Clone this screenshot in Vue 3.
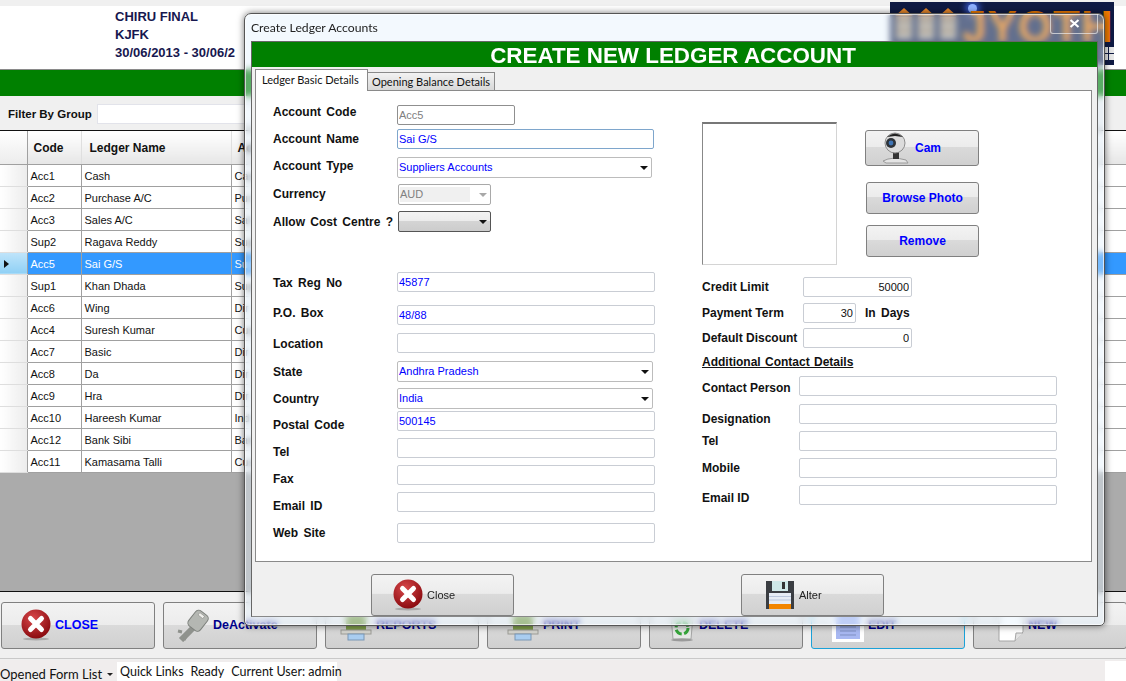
<template>
  <div class="screen">
    <header class="top">
      <div class="company">
        <div>CHIRU FINAL</div>
        <div>KJFK</div>
        <div>30/06/2013 - 30/06/2</div>
      </div>
      <div class="logo">
        <svg width="70" height="50" viewBox="0 0 70 50">
          <g v-for="x in [3, 25, 47]" :key="x">
            <path :d="`M${x} 14 L${x + 9} 6 L${x + 18} 14Z`" fill="#e8872a" />
            <rect :x="x + 1" y="15" width="16" height="22" fill="#b5aa98" />
            <rect :x="x + 3" y="18" width="4" height="4" fill="#6b3f1a" />
            <rect :x="x + 10" y="18" width="4" height="4" fill="#6b3f1a" />
            <rect :x="x + 3" y="27" width="4" height="4" fill="#6b3f1a" />
            <rect :x="x + 10" y="27" width="4" height="4" fill="#6b3f1a" />
          </g>
        </svg>
        <span class="star"></span>
        <span class="logo-name">JYOTHI</span>
        <span class="logo-dots"><i></i><i></i><i></i><i></i></span>
      </div>
    </header>
    <div class="green-bar"></div>
    <div class="filter-bar">
      <b>Filter By Group</b>
      <input class="filter-input" type="text" />
    </div>

    <table class="grid">
      <thead>
        <tr>
          <th class="head-col"></th>
          <th class="code-col">Code</th>
          <th class="name-col">Ledger Name</th>
          <th class="type-col">Acc</th>
          <th class="bal-col"></th>
        </tr>
      </thead>
      <tbody>
        <tr v-for="row in ledgers" :key="row.code" :class="{ selected: row.code === 'Acc5' }">
          <td class="row-head"><span v-if="row.code === 'Acc5'" class="pointer"></span></td>
          <td>{{ row.code }}</td>
          <td>{{ row.name }}</td>
          <td>{{ row.type }}</td>
          <td class="bal">{{ row.bal }}</td>
        </tr>
      </tbody>
    </table>
    <div class="grey-area"></div>

    <div class="action-bar">
      <button class="big-btn b-close" type="button">
        <svg width="30" height="32" viewBox="0 0 30 32"><use href="#x-circle" /></svg>
        <span class="blue-label">CLOSE</span>
      </button>
      <button class="big-btn b-key" type="button">
        <svg width="34" height="34" viewBox="0 0 34 34">
          <path d="M18 19 L5 32" stroke="#8f928d" stroke-width="6" />
          <path d="M6 24 L2 23 M10 28 L8 32" stroke="#8f928d" stroke-width="3" />
          <rect x="15" y="3" width="15" height="19" rx="4" transform="rotate(38 22 12)" fill="#b4b7b2" stroke="#7d807c" />
          <rect x="22" y="6" width="6" height="3" transform="rotate(38 25 8)" fill="#eeeeea" stroke="#8a8a86" stroke-width="0.6" />
        </svg>
        <span class="navy-label">DeActivate</span>
      </button>
      <button class="big-btn b-report" type="button">
        <svg width="32" height="34" viewBox="0 0 32 34"><use href="#printer" /></svg>
        <span class="navy-label">REPORTS</span>
      </button>
      <button class="big-btn b-print" type="button">
        <svg width="32" height="34" viewBox="0 0 32 34"><use href="#printer" /></svg>
        <span class="navy-label">PRINT</span>
      </button>
      <button class="big-btn b-delete" type="button">
        <svg width="26" height="34" viewBox="0 0 26 34">
          <path d="M2 8 H24 L22 31 H4Z" fill="#e6e8e6" stroke="#a5a5a5" />
          <circle cx="13" cy="20" r="6" fill="none" stroke="#35a53a" stroke-width="3" stroke-dasharray="7 2.5" />
          <ellipse cx="13" cy="32" rx="11" ry="1.5" fill="#9a9a9a" />
        </svg>
        <span class="navy-label">DELETE</span>
      </button>
      <button class="big-btn b-edit" type="button">
        <svg width="32" height="34" viewBox="0 0 32 34">
          <rect width="32" height="34" fill="#fff" />
          <rect x="4" y="0" width="24" height="31" fill="#a8b8f2" />
          <path d="M8 19 H24 M8 23 H24 M8 27 H24" stroke="#7f8fc2" />
        </svg>
        <span class="navy-label">EDIT</span>
      </button>
      <button class="big-btn b-new" type="button">
        <svg width="26" height="34" viewBox="0 0 26 34">
          <path d="M1 2 H25 V24 L17 33 H1Z" fill="#fff" stroke="#a5a5a5" />
          <path d="M17 33 L18 25 H25" fill="#e3e3e3" stroke="#a5a5a5" />
        </svg>
        <span class="navy-label">NEW</span>
      </button>
    </div>

    <footer class="status">
      <span class="form-list">Opened Form List <i class="tiny-arrow"></i></span>
      <span class="links">
        <span>Quick Links</span><span>Ready</span><span>Current User: admin</span>
      </span>
      <span class="status-end"></span>
    </footer>

    <section class="dialog">
      <div class="title-row">
        <span>Create Ledger Accounts</span>
        <span class="win-close">
          <svg width="11" height="9" viewBox="0 0 11 9">
            <path d="M1.5 1 L9.5 8 M9.5 1 L1.5 8" stroke="#fff" stroke-width="2.2" />
          </svg>
        </span>
      </div>
      <div class="client">
        <h1 class="banner">CREATE NEW LEDGER ACCOUNT</h1>
        <div class="tabs">
          <span class="tab active">Ledger Basic Details</span>
          <span class="tab">Opening Balance Details</span>
        </div>
        <div class="panel">
          <div class="left-col">
            <div v-for="f in leftFields" :key="f.label" class="row" :style="{ marginTop: f.gap + 'px' }">
              <label class="lbl" :style="{ transform: `translateY(${f.dy}px)` }">{{ f.label }}</label>
              <div v-if="f.kind === 'select'" class="field select" :style="{ width: f.w + 'px' }">
                {{ f.value }}<i class="arrow"></i>
              </div>
              <div v-else-if="f.kind === 'off'" class="field select off" :style="{ width: f.w + 'px' }">
                <span class="off-text">{{ f.value }}</span><i class="arrow"></i>
              </div>
              <div v-else-if="f.kind === 'drop'" class="field select drop" :style="{ width: f.w + 'px' }">
                <i class="arrow"></i>
              </div>
              <input
                v-else
                class="field"
                :class="{ locked: f.kind === 'locked', focus: f.kind === 'focus' }"
                :style="{ width: f.w + 'px' }"
                type="text"
                readonly
                :value="f.value"
              />
            </div>
          </div>

          <div class="right-col">
            <div class="photo-row">
              <div class="photo"></div>
              <div class="photo-btns">
                <button class="btn cam" type="button">
                  <svg width="30" height="32" viewBox="0 0 30 32">
                    <path d="M3 29 Q12 24 26 28 L28 31 H6Z" fill="#e4e4e4" stroke="#9a9a9a" />
                    <rect x="13" y="19" width="6" height="8" fill="#333" />
                    <circle cx="15" cy="11" r="10" fill="#dcdcdc" stroke="#8d8d8d" />
                    <path d="M7 5 Q15 -2 23 5 L15 4Z" fill="#222" />
                    <circle cx="11" cy="11" r="5" fill="#2e3338" />
                    <circle cx="11" cy="11" r="2.4" fill="#3e74b5" />
                  </svg>
                  <span>Cam</span>
                </button>
                <button class="btn browse" type="button">Browse Photo</button>
                <button class="btn remove" type="button">Remove</button>
              </div>
            </div>

            <div class="row credit">
              <label class="lbl wide">Credit Limit</label>
              <input class="field num" type="text" readonly value="50000" />
            </div>
            <div class="row term">
              <label class="lbl wide">Payment Term</label>
              <input class="field num short" type="text" readonly value="30" />
              <span class="lbl days">In Days</span>
            </div>
            <div class="row discount">
              <label class="lbl wide">Default Discount</label>
              <input class="field num" type="text" readonly value="0" />
            </div>
            <div class="extra-title">Additional Contact Details</div>
            <div v-for="c in contacts" :key="c.label" class="row" :style="{ marginTop: c.gap + 'px' }">
              <label class="lbl contact" :style="{ transform: `translateY(${c.dy}px)` }">{{ c.label }}</label>
              <input class="field contact-input" type="text" readonly />
            </div>
          </div>
        </div>
        <div class="dialog-foot">
          <button class="btn foot-btn" type="button">
            <svg width="32" height="32" viewBox="0 0 30 32"><use href="#x-circle" /></svg>
            <span>Close</span>
          </button>
          <button class="btn foot-btn alter" type="button">
            <svg width="30" height="30" viewBox="0 0 30 30">
              <path d="M1 1 H29 V29 H1Z" fill="#3a3d42" />
              <rect x="7" y="1" width="16" height="10" fill="#cfe8e8" />
              <rect x="17" y="2" width="3" height="7" fill="#333" />
              <rect x="4" y="13" width="22" height="12" fill="#e6ecf5" />
              <path d="M4 16.5 H26 M4 20 H26" stroke="#b9c6dc" />
              <rect x="4" y="24" width="22" height="5" fill="#f28500" />
            </svg>
            <span>Alter</span>
          </button>
        </div>
      </div>
    </section>

    <svg class="defs" width="0" height="0">
      <defs>
        <radialGradient id="red-ball" cx="40%" cy="30%" r="75%">
          <stop offset="0" stop-color="#d8474a" />
          <stop offset="1" stop-color="#86070c" />
        </radialGradient>
        <symbol id="x-circle" viewBox="0 0 30 32">
          <ellipse cx="15" cy="30" rx="13" ry="1.5" fill="#a9a9a9" />
          <circle cx="15" cy="15" r="14.5" fill="url(#red-ball)" />
          <path d="M9.5 9.5 L20.5 20.5 M20.5 9.5 L9.5 20.5" stroke="#fff" stroke-width="5" stroke-linecap="round" />
        </symbol>
        <symbol id="printer" viewBox="0 0 32 34">
          <rect x="6" y="6" width="20" height="18" fill="#7f9f4a" />
          <rect x="1" y="22" width="30" height="4" fill="#d4d4ce" stroke="#9c9c96" />
          <rect x="8" y="26" width="16" height="6" fill="#a9cdf0" stroke="#7b97b5" />
        </symbol>
      </defs>
    </svg>
  </div>
</template>

<script setup>
const ledgers = [
  { code: "Acc1", name: "Cash", type: "Cas", bal: "0 Dr" },
  { code: "Acc2", name: "Purchase A/C", type: "Pur", bal: "0 Dr" },
  { code: "Acc3", name: "Sales A/C", type: "Sal", bal: "20 Cr" },
  { code: "Sup2", name: "Ragava Reddy", type: "Sup", bal: "00 Cr" },
  { code: "Acc5", name: "Sai G/S", type: "Sup", bal: "0 Dr" },
  { code: "Sup1", name: "Khan Dhada", type: "Sup", bal: "00 Cr" },
  { code: "Acc6", name: "Wing", type: "Dir", bal: "0 Dr" },
  { code: "Acc4", name: "Suresh Kumar", type: "Cus", bal: "0 Dr" },
  { code: "Acc7", name: "Basic", type: "Dir", bal: "0 Dr" },
  { code: "Acc8", name: "Da", type: "Dir", bal: "0 Dr" },
  { code: "Acc9", name: "Hra", type: "Dir", bal: "0 Dr" },
  { code: "Acc10", name: "Hareesh Kumar", type: "Ind", bal: "00 Cr" },
  { code: "Acc12", name: "Bank Sibi", type: "Ban", bal: "0 Dr" },
  { code: "Acc11", name: "Kamasama Talli", type: "Cus", bal: "00 Cr" },
];

const leftFields = [
  { label: "Account Code", gap: 0, dy: -3, w: 118, kind: "locked", value: "Acc5" },
  { label: "Account Name", gap: 4, dy: 0, w: 257, kind: "focus", value: "Sai G/S" },
  { label: "Account Type", gap: 8, dy: -2, w: 255, kind: "select", value: "Suppliers Accounts" },
  { label: "Currency", gap: 6, dy: -1, w: 93, kind: "off", value: "AUD" },
  { label: "Allow Cost Centre ?", gap: 6, dy: 0, w: 93, kind: "drop" },
  { label: "Tax Reg No", gap: 40, dy: 1, w: 258, value: "45877" },
  { label: "P.O. Box", gap: 13, dy: -2, w: 258, value: "48/88" },
  { label: "Location", gap: 8, dy: 1, w: 258 },
  { label: "State", gap: 8, dy: 0, w: 256, kind: "select", value: "Andhra Pradesh" },
  { label: "Country", gap: 6, dy: 0, w: 256, kind: "select", value: "India" },
  { label: "Postal Code", gap: 2, dy: 4, w: 258, value: "500145" },
  { label: "Tel", gap: 7, dy: 4, w: 258 },
  { label: "Fax", gap: 7, dy: 4, w: 258 },
  { label: "Email ID", gap: 7, dy: 4, w: 258 },
  { label: "Web Site", gap: 11, dy: 0, w: 258 },
];

const contacts = [
  { label: "Contact Person", gap: 6, dy: 2 },
  { label: "Designation", gap: 8, dy: 5 },
  { label: "Tel", gap: 7, dy: 0 },
  { label: "Mobile", gap: 7, dy: 0 },
  { label: "Email ID", gap: 7, dy: 3 },
];
</script>

<style>
html,
body {
  margin: 0;
  overflow: hidden;
}
</style>

<style scoped>
.screen {
  position: relative;
  width: 1126px;
  height: 681px;
  overflow: hidden;
  display: flex;
  flex-direction: column;
  background: #f0f0f0;
  font-family: "Liberation Sans", Arial, sans-serif;
  font-size: 12px;
  color: #111;
}

.top {
  height: 63px;
  margin-top: 6px;
  background: #fff;
  display: flex;
  position: relative;
  flex: none;
}

.company {
  margin-left: 115px;
  padding-top: 2px;
  font-size: 13px;
  line-height: 18px;
  font-weight: 700;
  color: #17174f;
  white-space: nowrap;
}

.logo {
  position: absolute;
  left: 890px;
  top: -4px;
  width: 224px;
  height: 63px;
  background: #0f1a44;
  overflow: hidden;
}

.logo svg {
  position: absolute;
  left: 2px;
  top: 0;
}

.star {
  position: absolute;
  left: 78px;
  top: 2px;
  width: 9px;
  height: 9px;
  border-radius: 50%;
  background: #8fb0ff;
  box-shadow: 0 0 6px 3px #3657c9;
}

.logo-name {
  position: absolute;
  left: 72px;
  top: 3px;
  font-size: 44px;
  line-height: 44px;
  font-weight: 700;
  color: #ee7a00;
  letter-spacing: 1px;
}

.logo-dots {
  position: absolute;
  left: 213px;
  top: 45px;
  display: grid;
  grid-template-columns: 5px 5px;
  gap: 1px;
}

.logo-dots i {
  display: block;
  height: 6px;
  background: #e8e8e8;
}

.green-bar {
  flex: none;
  height: 27px;
  background: #008000;
  border-top: 1px solid #8a8a8a;
  box-sizing: border-box;
}

.filter-bar {
  flex: none;
  height: 35px;
  display: flex;
  align-items: center;
  gap: 5px;
  padding: 2px 0 0 8px;
  box-sizing: border-box;
  background: #f0f0f0;
  border-bottom: 1px solid #111;
  font-size: 11.5px;
}

.filter-input {
  width: 400px;
  height: 20px;
  padding: 0;
  box-sizing: border-box;
  border: 1px solid #e2e3ea;
  background: #fff;
}

.grid {
  flex: none;
  width: 1134px;
  table-layout: fixed;
  border-collapse: collapse;
  background: #fff;
  font-size: 11px;
}

.grid th {
  height: 33px;
  box-sizing: border-box;
  padding: 2px 0 0 6px;
  text-align: left;
  font-size: 12px;
  background: linear-gradient(#ffffff, #f8f8f8 30%, #e6e6e6);
  border-right: 1px solid #dfdfdf;
  border-bottom: 1px solid #a0a0a0;
  overflow: hidden;
  white-space: nowrap;
}

.grid .head-col {
  width: 27px;
  padding: 0;
  border-right: 1px solid #a0a0a0;
  background: linear-gradient(#fff, #ececec);
}

.grid .code-col {
  width: 54px;
}

.grid .name-col {
  width: 150px;
  padding-left: 8px;
}

.grid .type-col {
  width: 813px;
}

.grid .bal-col {
  width: auto;
}

.grid td {
  height: 20px;
  padding: 1px 0 0 3px;
  border-right: 1px solid #a0a0a0;
  border-bottom: 1px solid #a0a0a0;
  white-space: nowrap;
  overflow: hidden;
  box-sizing: content-box;
}

.grid td.row-head {
  padding: 0;
  background: linear-gradient(90deg, #fff, #ececec);
  border-bottom: 1px solid #dedede;
  position: relative;
}

.grid td.bal {
  text-align: left;
  padding-left: 4px;
  font-size: 12px;
}

.grid .selected td {
  background: #3399ff;
  color: #fff;
}

.grid .selected td.row-head {
  background: linear-gradient(#bfe4fa, #8fd0f5);
}

.pointer {
  position: absolute;
  left: 4px;
  top: 7px;
  border-left: 5px solid #111;
  border-top: 4px solid transparent;
  border-bottom: 4px solid transparent;
}

.grey-area {
  flex: none;
  height: 118px;
  background: #ababab;
  border-bottom: 1px solid #111;
  box-sizing: content-box;
}

.action-bar {
  flex: none;
  display: flex;
  gap: 8px;
  padding: 10px 0 0 1px;
  height: 56px;
  box-sizing: content-box;
  border-bottom: 1px solid #c9c9c9;
}

.big-btn {
  flex: none;
  width: 154px;
  height: 47px;
  display: flex;
  align-items: center;
  gap: 4px;
  box-sizing: border-box;
  border: 1px solid #808080;
  border-radius: 3px;
  background: linear-gradient(#f3f3f3, #ececec 48%, #dadada 50%, #d0d0d0);
  font-family: "Liberation Sans", Arial, sans-serif;
  font-size: 12.5px;
  font-weight: 700;
}

.big-btn svg {
  flex: none;
}

.b-close {
  padding: 0 0 0 19px;
}

.b-key {
  padding: 0 0 0 12px;
  gap: 3px;
}

.b-report {
  padding: 0 0 0 14px;
}

.b-print,
.b-delete {
  padding: 0 0 0 19px;
}

.b-edit {
  padding: 0 0 0 20px;
  border: 1px solid #1ba1d8;
}

.b-new {
  padding: 0 0 0 24px;
}

.blue-label {
  color: #0000ff;
}

.navy-label {
  color: #00008b;
}

.status {
  flex: 1;
  display: flex;
  align-items: stretch;
  background: #f0eded;
  margin-top: 1px;
  font-family: Lato, sans-serif;
  font-size: 12.5px;
}

.form-list {
  width: 117px;
  box-sizing: border-box;
  white-space: nowrap;
  padding-top: 6px;
  font-size: 13px;
}

.tiny-arrow {
  display: inline-block;
  margin: 0 0 3px 2px;
  border-top: 3px solid #222;
  border-left: 3px solid transparent;
  border-right: 3px solid transparent;
}

.links {
  width: 220px;
  background: #fff;
  display: flex;
  gap: 7px;
  margin-top: 2px;
  padding: 2px 0 0 3px;
  box-sizing: border-box;
  white-space: nowrap;
}

.status-end {
  margin-left: auto;
  margin-top: 1px;
  width: 21px;
  background: #fff;
}

.dialog {
  position: absolute;
  left: 244px;
  top: 13px;
  width: 861px;
  height: 613px;
  box-sizing: border-box;
  padding: 0 6px 8px 6px;
  display: flex;
  flex-direction: column;
  border: 1px solid #555;
  border-radius: 7px 7px 5px 5px;
  background: rgba(226, 240, 252, 0.4);
  backdrop-filter: blur(3px);
  box-shadow: 0 0 7px rgba(0, 0, 0, 0.55), inset 0 0 0 1px rgba(255, 255, 255, 0.65);
}

.title-row {
  flex: none;
  height: 27px;
  display: flex;
  align-items: flex-start;
  justify-content: space-between;
  font-family: Lato, sans-serif;
  font-size: 12.2px;
  line-height: 28px;
  color: #222;
}

.win-close {
  width: 46px;
  height: 19px;
  display: grid;
  place-items: center;
  border: 1px solid rgba(235, 235, 235, 0.7);
  border-top: 0;
  border-radius: 0 0 3px 3px;
}

.client {
  flex: 1;
  display: flex;
  flex-direction: column;
  background: #f0f0f0;
  border: 1px solid #666;
  border-bottom: 1px solid #888;
  min-height: 0;
}

.banner {
  flex: none;
  margin: 0;
  height: 25px;
  padding-right: 3px;
  background: #008000;
  color: #fff;
  text-align: center;
  font-size: 22.4px;
  line-height: 27px;
  font-weight: 700;
  overflow: hidden;
}

.tabs {
  flex: none;
  height: 23px;
  display: flex;
  align-items: flex-end;
  padding: 0 0 0 3px;
  box-sizing: border-box;
  font-family: Lato, sans-serif;
  font-size: 11px;
}

.tab {
  height: 17px;
  padding: 0 4px;
  line-height: 17px;
  border: 1px solid #8a8a8a;
  border-left: 0;
  border-bottom: 0;
  background: linear-gradient(#f2f2f2, #d8d8d8);
  box-sizing: content-box;
  white-space: nowrap;
}

.tab.active {
  position: relative;
  z-index: 1;
  height: 21px;
  width: 105px;
  line-height: 20px;
  padding: 0 0 0 6px;
  margin-bottom: -1px;
  border-left: 1px solid #8a8a8a;
  background: #fff;
}

.panel {
  flex: none;
  height: 472px;
  margin: 0 5px 0 3px;
  display: flex;
  box-sizing: border-box;
  background: #fff;
  border: 1px solid #8a8a8a;
}

.left-col {
  flex: none;
  width: 446px;
  box-sizing: border-box;
  padding: 14px 0 0 17px;
}

.row {
  display: flex;
  align-items: center;
  min-height: 20px;
}

.lbl {
  flex: none;
  width: 124px;
  font-weight: 700;
  font-size: 12px;
  word-spacing: 2px;
  color: #111;
  white-space: nowrap;
}

.field {
  height: 20px;
  box-sizing: border-box;
  padding: 0 1px;
  border: 1px solid #c9cdd4;
  border-radius: 2px;
  background: #fff;
  color: #0000ff;
  font-family: "Liberation Sans", Arial, sans-serif;
  font-size: 11px;
  line-height: 18px;
  outline: 0;
}

.field.locked {
  color: #808080;
  border-color: #8f8f8f;
}

.field.focus {
  border-color: #7ea6cc;
}

.select {
  position: relative;
  height: 21px;
  line-height: 19px;
  border-color: #bcbcbc;
}

.off {
  margin-left: 1px;
  border-color: #a9a9a9;
  color: #808080;
}

.off-text {
  display: block;
  width: 70px;
  height: 15px;
  margin-top: 2px;
  line-height: 15px;
  background: #f0f0f0;
}

.off .arrow {
  border-top-color: #a8a8a8;
}

.drop {
  margin-left: 1px;
  border-color: #555;
  background: linear-gradient(#f3f3f3, #ececec 45%, #d4d4d4 50%, #cccccc);
}

.arrow {
  position: absolute;
  right: 3px;
  top: 8px;
  border-top: 4px solid #111;
  border-left: 4px solid transparent;
  border-right: 4px solid transparent;
}

.right-col {
  flex: 1;
  padding-top: 31px;
}

.photo-row {
  display: flex;
  gap: 28px;
}

.photo {
  width: 135px;
  height: 143px;
  box-sizing: border-box;
  border: 1px solid #d4d4d4;
  border-top: 2px solid #777;
  border-left: 1px solid #888;
}

.photo-btns {
  padding-top: 8px;
  display: flex;
  flex-direction: column;
  align-items: flex-end;
  width: 114px;
}

.btn {
  box-sizing: border-box;
  border: 1px solid #808080;
  border-radius: 3px;
  background: linear-gradient(#f3f3f3, #ececec 46%, #dadada 48%, #d0d0d0);
  font-family: "Liberation Sans", Arial, sans-serif;
  font-size: 12px;
  font-weight: 700;
  color: #0000ff;
  padding: 0;
}

.cam {
  width: 114px;
  height: 36px;
  display: flex;
  align-items: center;
  padding-left: 14px;
  gap: 5px;
}

.browse {
  width: 113px;
  height: 32px;
  margin-top: 16px;
}

.remove {
  width: 113px;
  height: 32px;
  margin-top: 11px;
}

.credit {
  margin-top: 12px;
}

.term {
  margin-top: 6px;
}

.discount {
  margin-top: 5px;
}

.lbl.wide {
  width: 101px;
  word-spacing: 0;
}

.lbl.days {
  width: auto;
  margin-left: 9px;
}

.num {
  width: 109px;
  text-align: right;
  color: #111;
  padding-right: 2px;
}

.num.short {
  width: 53px;
}

.extra-title {
  margin-top: 6px;
  height: 16px;
  line-height: 16px;
  font-weight: 700;
  text-decoration: underline;
  word-spacing: 1px;
}

.lbl.contact {
  width: 97px;
  word-spacing: 0;
}

.contact-input {
  width: 258px;
}

.dialog-foot {
  flex: 1;
  display: flex;
  align-items: flex-start;
  padding: 12px 0 0 119px;
}

.foot-btn {
  width: 143px;
  height: 42px;
  display: flex;
  align-items: center;
  gap: 3px;
  padding-left: 20px;
  font-size: 11px;
  font-weight: 400;
  color: #222;
}

.foot-btn.alter {
  margin-left: 227px;
  padding-left: 23px;
  gap: 4px;
}

.defs {
  position: absolute;
}
</style>
